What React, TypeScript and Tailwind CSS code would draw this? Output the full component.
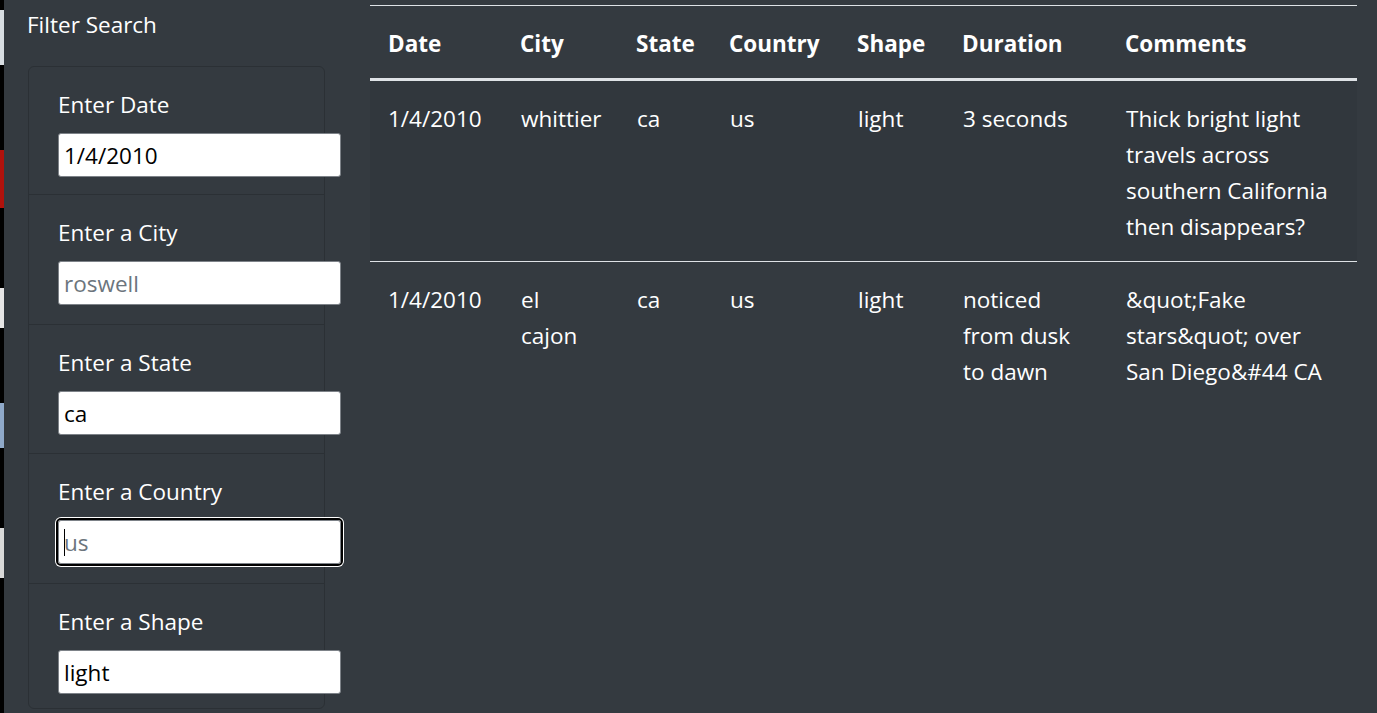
import React from 'react';

interface Sighting {
  datetime: string;
  city: string;
  state: string;
  country: string;
  shape: string;
  durationMinutes: string;
  comments: string;
}

const sightings: Sighting[] = [
  {
    datetime: '1/4/2010',
    city: 'whittier',
    state: 'ca',
    country: 'us',
    shape: 'light',
    durationMinutes: '3 seconds',
    comments: 'Thick bright light travels across southern California then disappears?',
  },
  {
    datetime: '1/4/2010',
    city: 'el cajon',
    state: 'ca',
    country: 'us',
    shape: 'light',
    durationMinutes: 'noticed from dusk to dawn',
    comments: '&quot;Fake stars&quot; over San Diego&#44 CA',
  },
];

const filters = [
  { label: 'Enter Date', value: '1/4/2010', placeholder: '', pad: 'pt-[18px] pb-[17px]' },
  { label: 'Enter a City', value: '', placeholder: 'roswell', pad: 'pt-[18px] pb-[19px]' },
  { label: 'Enter a State', value: 'ca', placeholder: '', pad: 'pt-[18px] pb-[18px]' },
  { label: 'Enter a Country', value: '', placeholder: 'us', pad: 'pt-[18px] pb-[19px]', focused: true },
  { label: 'Enter a Shape', value: 'light', placeholder: '', pad: 'pt-[18px] pb-[14px]' },
];

const headers = ['Date', 'City', 'State', 'Country', 'Shape', 'Duration', 'Comments'];
const colWidths = ['w-[132px]', 'w-[116px]', 'w-[93px]', 'w-[128px]', 'w-[105px]', 'w-[163px]', 'w-[250px]'];

// strip of desktop icons peeking in at the left edge
const DesktopStrip: React.FC = () => (
  <div className="w-[4px] shrink-0 bg-black flex flex-col">
    <div className="h-[10px]" />
    <div className="h-[55px] bg-[#d8dde2]" />
    <div className="h-[85px]" />
    <div className="h-[58px] bg-[#b0120c]" />
    <div className="h-[80px]" />
    <div className="h-[40px] bg-[#e6e6e6]" />
    <div className="h-[75px]" />
    <div className="h-[45px] bg-[#8fa9c9]" />
    <div className="h-[80px]" />
    <div className="h-[50px] bg-[#d9d9d9]" />
  </div>
);

const App: React.FC = () => {
  return (
    <div className="flex h-[713px] overflow-hidden bg-[#343a40] text-white font-['Open_Sans',sans-serif] text-[22.5px] leading-[36px]">
      <DesktopStrip />

      <div className="w-[351px] shrink-0 pl-[23px] pt-[7px]">
        <h5 className="leading-[36px]">Filter Search</h5>
        <ul className="mt-[23px] ml-px w-[297px] rounded-[6px] border border-[#2b3035]">
          {filters.map((f, i) => (
            <li
              key={f.label}
              className={`px-[29px] ${f.pad} ${i > 0 ? 'border-t border-[#2b3035]' : ''}`}
            >
              <label className="block pt-[2px] mb-[10px]">{f.label}</label>
              <div className="relative w-[283px]">
                <input
                  readOnly
                  value={f.value}
                  placeholder={f.placeholder}
                  className={
                    f.focused
                      ? 'block w-[283px] h-[44px] px-[5px] bg-white text-black rounded-[3px] border border-[#7d8288] outline-2 outline-black shadow-[0_0_0_3px_white] placeholder:text-[#6c757d]'
                      : 'block w-[283px] h-[44px] px-[5px] bg-white text-black rounded-[3px] border border-[#7d8288] outline-none placeholder:text-[#6c757d]'
                  }
                />
                {f.focused && <span className="absolute left-[6px] top-[9px] h-[27px] w-px bg-black" />}
              </div>
            </li>
          ))}
        </ul>
      </div>

      <div className="pt-[5px] pl-[15px]">
        <table className="table-fixed w-[987px] border-collapse text-left">
          <thead>
            <tr className="border-t border-[#dee2e6] border-b-[3px] border-b-[#dee2e6]">
              {headers.map((h, i) => (
                <th key={h} className={`${colWidths[i]} pl-[18px] pr-[18px] pt-[20px] pb-[16px] font-bold align-bottom`}>
                  {h}
                </th>
              ))}
            </tr>
          </thead>
          <tbody>
            {sightings.map((s, i) => (
              <tr
                key={i}
                className={`${i > 0 ? 'border-t border-[#dee2e6]' : ''} ${i % 2 === 0 ? 'bg-[#31373d]' : ''}`}
              >
                <td className="pl-[18px] pr-[18px] pt-[20px] pb-[16px] align-top">{s.datetime}</td>
                <td className="pl-[19px] pr-[22px] pt-[20px] pb-[16px] align-top">{s.city}</td>
                <td className="pl-[19px] pr-[18px] pt-[20px] pb-[16px] align-top">{s.state}</td>
                <td className="pl-[19px] pr-[18px] pt-[20px] pb-[16px] align-top">{s.country}</td>
                <td className="pl-[19px] pr-[18px] pt-[20px] pb-[16px] align-top">{s.shape}</td>
                <td className="pl-[19px] pr-[18px] pt-[20px] pb-[16px] align-top">{s.durationMinutes}</td>
                <td className="pl-[19px] pr-[18px] pt-[20px] pb-[16px] align-top">{s.comments}</td>
              </tr>
            ))}
          </tbody>
        </table>
      </div>
    </div>
  );
};

export default App;
